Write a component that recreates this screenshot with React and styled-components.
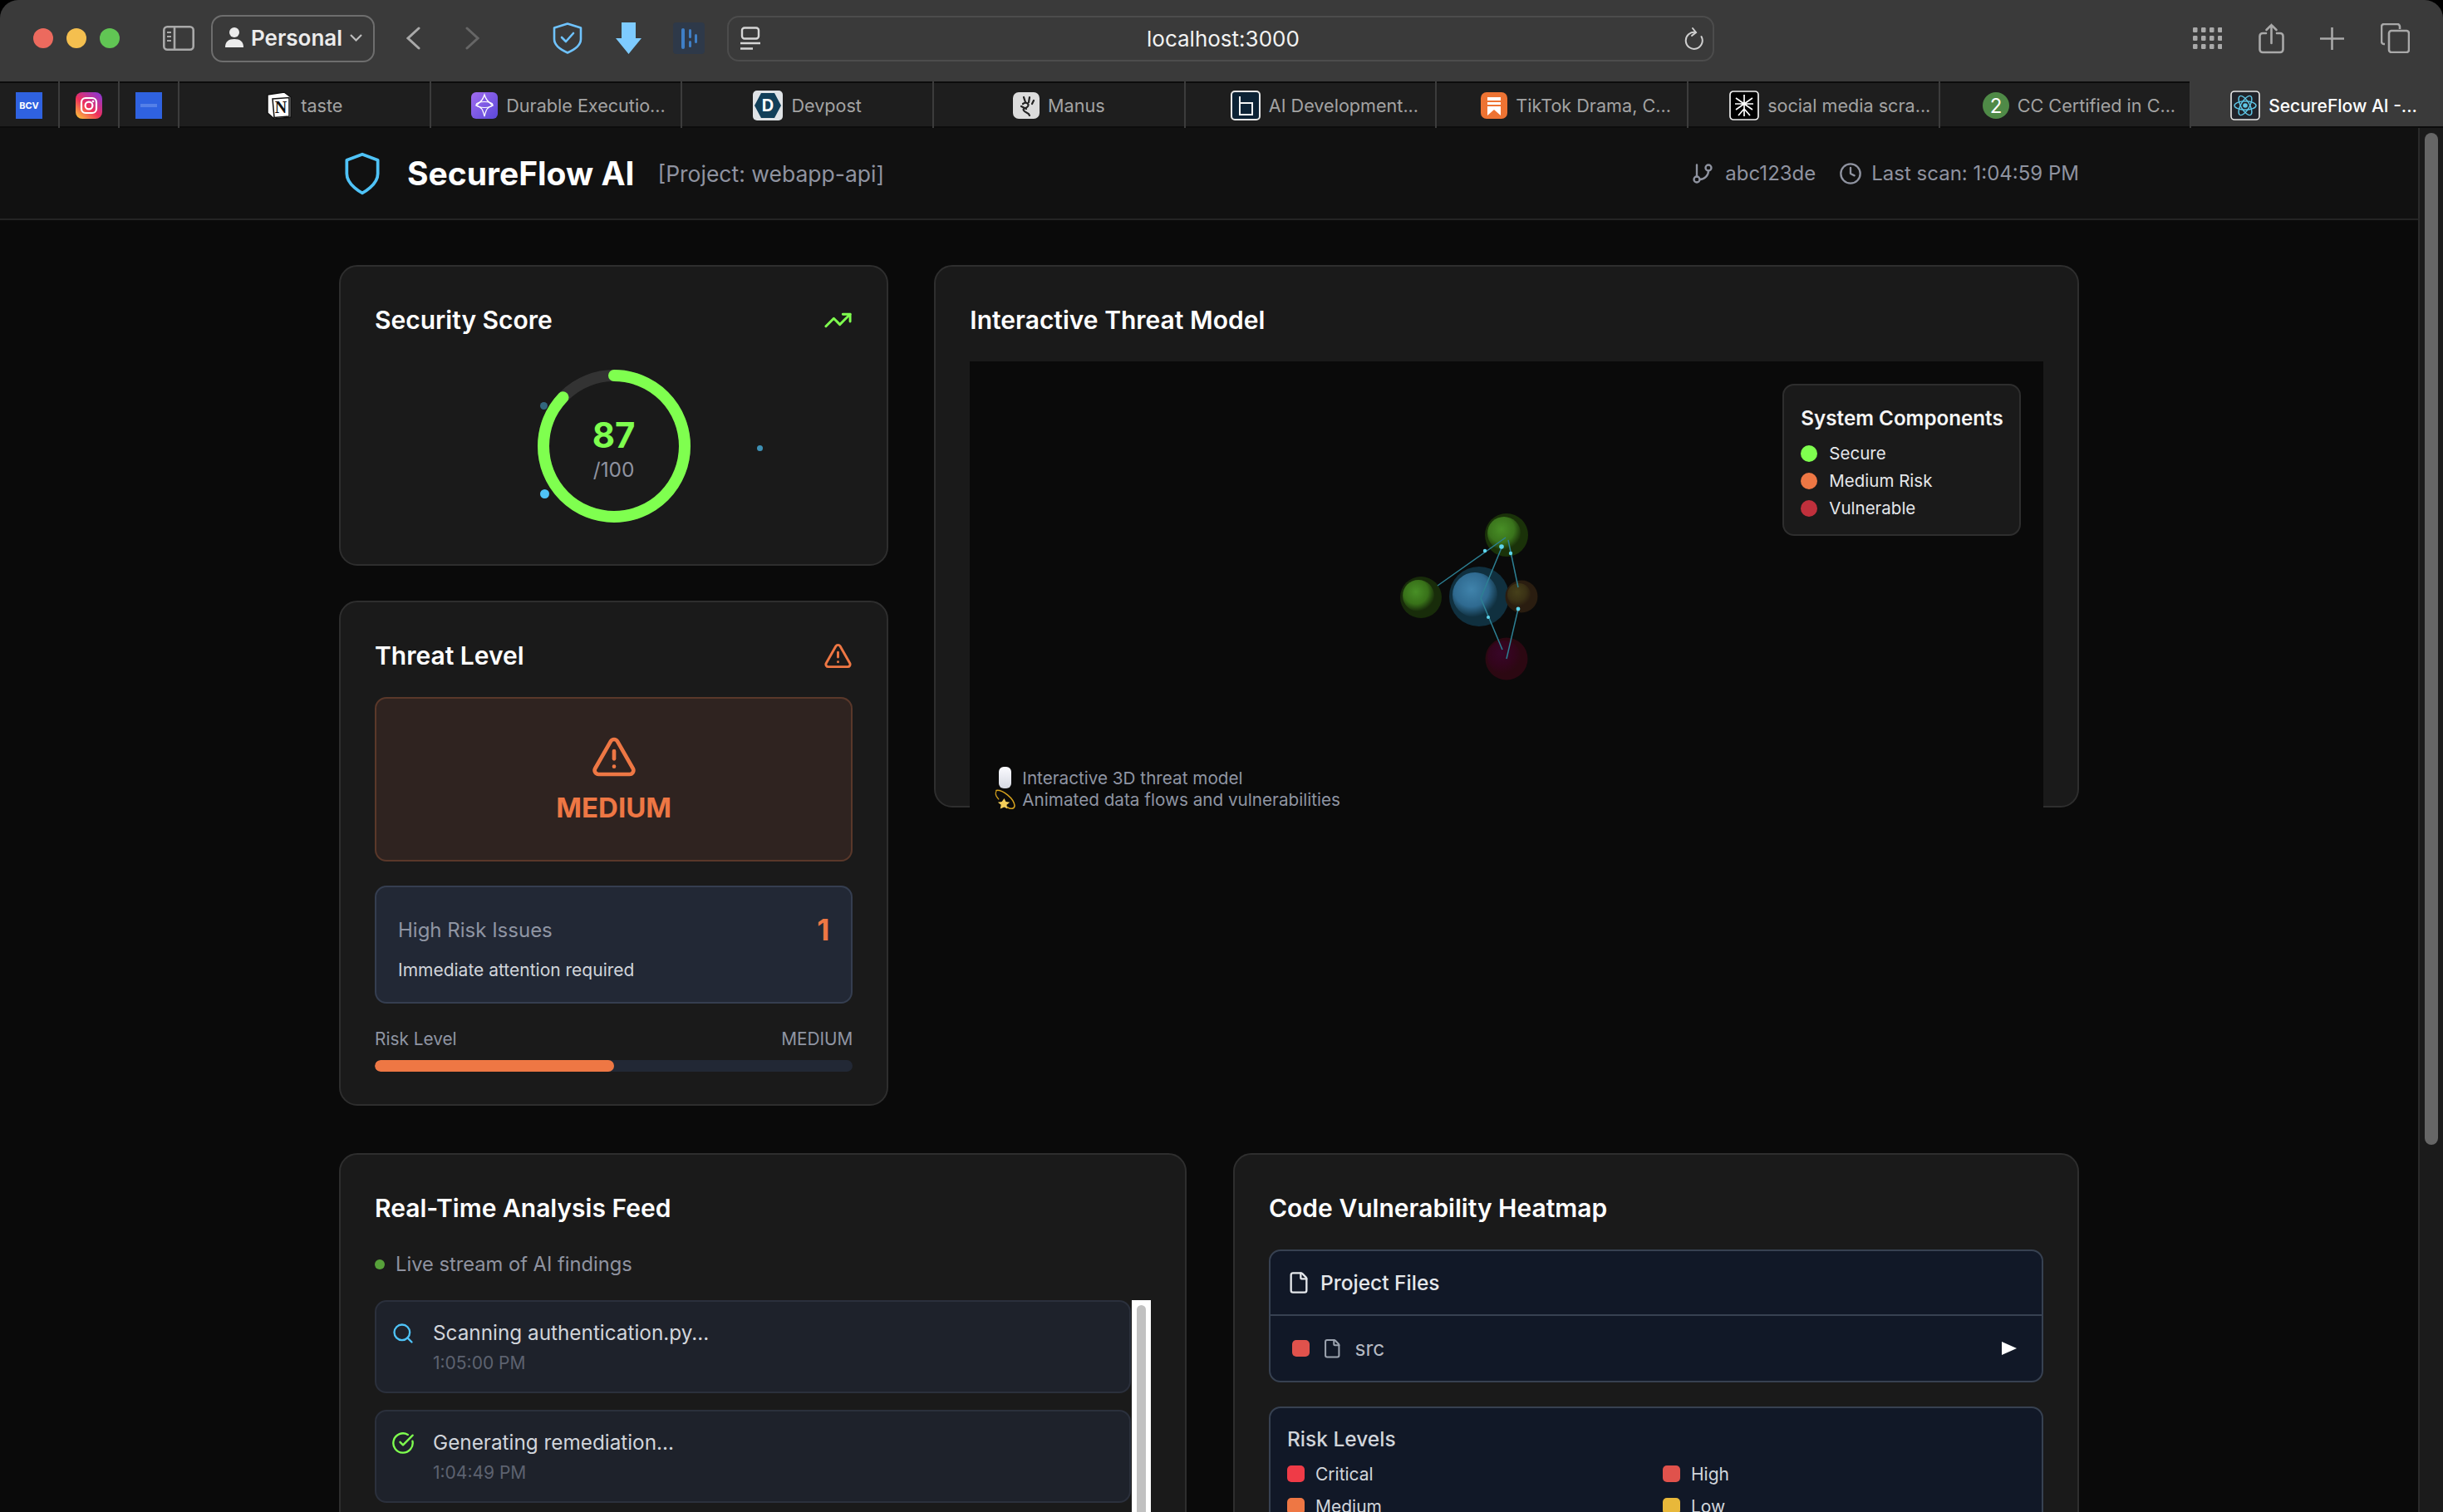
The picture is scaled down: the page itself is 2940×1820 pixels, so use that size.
import React from "react";
import styled, { createGlobalStyle } from "styled-components";
import { TrendingUp, TriangleAlert, GitBranch, Clock, Search, CircleCheckBig, File } from "lucide-react";

const Global = createGlobalStyle`
  html, body { margin: 0; padding: 0; background: #000; overflow: hidden; }
  body { font-family: Inter, "Noto Sans", "Liberation Sans", sans-serif; }
  * { box-sizing: border-box; }
`;

const Window = styled.div`
  width: 2940px; height: 1820px; display: flex; flex-direction: column;
  overflow: hidden; border-radius: 22px 22px 0 0; background: #0a0a0a;
`;
const Toolbar = styled.div`
  height: 98px; flex: none; display: flex; align-items: center;
  padding: 0 0 6px 40px; background: #3a3a3a;
`;
const Lights = styled.div`display: flex; gap: 16px;`;
const Light = styled.span`
  width: 24px; height: 24px; border-radius: 50%; background: ${p => p.$c};
`;
const Slot = styled.div`
  margin-left: ${p => p.$ml}px; display: flex; align-items: center; flex: none;
  svg { display: block; }
`;
const Profile = styled.div`
  width: 197px; height: 57px; border: 2px solid #6e6e6e; border-radius: 14px;
  margin-left: 20px; display: flex; align-items: center; padding: 0 0 2px 15px;
  color: #ececec; font-size: 26px; font-weight: 600; gap: 9px; flex: none;
`;
const UrlBar = styled.div`
  position: relative; width: 1188px; height: 55px; margin-left: 27px; flex: none;
  border: 2px solid #4c4c4c; border-radius: 14px; display: flex; align-items: center;
  justify-content: space-between; padding: 0 11px 0 14px;
`;
const UrlText = styled.span`
  color: #f2f2f2; font-size: 26px; font-weight: 400; position: absolute;
  left: 503px; top: 11px; line-height: 30px;
`;

const TabBar = styled.div`
  height: 56px; flex: none; display: flex; background: #1e1e1e;
  box-shadow: inset 0 2px 0 #0c0c0c, inset 0 -2px 0 #0c0c0c;
`;
const PinTab = styled.div`
  width: 72px; flex: none; display: flex; align-items: center; justify-content: center;
  padding-top: 2px; border-right: 2px solid #3c3c3c;
`;
const Tab = styled.div`
  flex: 0 0 calc((100% - 216px) / 9); min-width: 0; display: flex; align-items: center; justify-content: center; gap: 10px;
  padding: 2px 0 0 ${p => p.$shift || 0}px;
  font-size: ${p => p.$active ? 21 : 21.6}px; color: ${p => p.$active ? "#fff" : "#a3a3a3"};
  font-weight: ${p => p.$active ? 500 : 400};
  background: ${p => p.$active ? "#3a3a3a" : "transparent"};
  border-right: ${p => p.$active ? "none" : "2px solid #3c3c3c"};
  box-shadow: ${p => p.$active ? "inset 0 -2px 0 #0c0c0c" : "none"};
  svg { display: block; flex: none; }
`;

const Viewport = styled.div`flex: 1; min-height: 0; display: flex;`;
const Page = styled.div`flex: 1; min-width: 0; overflow: hidden; background: #0a0a0a;`;
const WinBar = styled.div`
  width: 30px; flex: none; background: #1b1b1b; border-left: 2px solid #2a2a2a; padding: 6px 6px 0 6px;
`;
const WinThumb = styled.div`width: 16px; height: 1218px; border-radius: 8px; background: #666;`;

const Header = styled.header`
  height: 111px; background: #111; border-bottom: 2px solid #242424;
  display: flex; align-items: center; justify-content: space-between; padding: 0 408px;
`;
const Brand = styled.div`display: flex; align-items: center;`;
const AppName = styled.h1`
  margin: 0 0 0 26px; font-size: 39px; font-weight: 700; color: #fff; line-height: 50px;
`;
const Project = styled.span`margin-left: 28px; font-size: 26.5px; color: #8f93a0;`;
const Meta = styled.div`
  display: flex; align-items: center; font-size: 24px; color: #8f93a0;
  svg { flex: none; }
`;
const MetaText = styled.span`margin-left: ${p => p.$ml}px;`;
const MetaClock = styled(Clock)`margin-left: 28px;`;

const Main = styled.main`padding: 54px 408px 0;`;
const TopGrid = styled.div`
  display: grid; grid-template-columns: repeat(3, 1fr); column-gap: 55px; align-items: start;
  margin-bottom: 57px;
`;
const LeftCol = styled.div`display: flex; flex-direction: column; gap: 42px;`;
const Card = styled.section`
  background: #1a1a1a; border: 2px solid #2e2e2e; border-radius: 22px;
  padding: 40px 41px ${p => p.$pb || 39}px;
`;
const ModelCard = styled(Card)`grid-column: span 2; height: 653px;`;
const CardHead = styled.div`
  display: flex; justify-content: space-between; align-items: center; height: 49px;
  margin-bottom: ${p => p.$mb}px;
`;
const CardTitle = styled.h2`margin: 0; font-size: 30px; font-weight: 600; color: #fff; line-height: 49px;`;

const RingWrap = styled.div`position: relative; width: 184px; height: 184px; margin: 0 auto;`;
const RingText = styled.div`
  position: absolute; inset: 0; display: flex; flex-direction: column; align-items: center; padding-top: 55px;
`;
const Score = styled.span`font-size: 42px; font-weight: 700; color: #7fff4f; line-height: 48px;`;
const Outof = styled.span`font-size: 24.5px; color: #8f93a0; line-height: 35px;`;
const Spark = styled.span`
  position: absolute; border-radius: 50%; background: #4fc3f7;
  left: ${p => p.$x}px; top: ${p => p.$y}px; width: ${p => p.$d}px; height: ${p => p.$d}px; opacity: ${p => p.$o};
`;

const LevelBox = styled.div`
  height: 198px; background: #2f2320; border: 2px solid #5a382a; border-radius: 14px;
  display: flex; flex-direction: column; align-items: center; padding-top: 42px;
`;
const LevelText = styled.div`
  font-size: 33px; font-weight: 700; color: #ee7744; line-height: 44px; margin-top: 11px;
`;
const InfoBox = styled.div`
  height: 142px; margin-top: 29px; background: #222835; border: 2px solid #353e50; border-radius: 14px;
  padding: 26px 26px 0;
`;
const InfoRow = styled.div`display: flex; justify-content: space-between; align-items: center; height: 50px;`;
const InfoLabel = styled.span`font-size: 24px; color: #8f95a3;`;
const InfoNum = styled.span`font-size: 35px; font-weight: 700; color: #ee7744;`;
const InfoSub = styled.div`font-size: 21px; line-height: 30px; color: #d1d5db; margin-top: 9px;`;
const RiskRow = styled.div`
  display: flex; justify-content: space-between; font-size: 20.8px; line-height: 30px; color: #8f95a3;
  margin-top: 28px;
`;
const Bar = styled.div`height: 14px; margin-top: 10px; border-radius: 7px; background: #222835; overflow: hidden;`;
const BarFill = styled.div`height: 100%; border-radius: 7px; background: #ee7744; width: ${p => p.$w}%;`;

const Canvas = styled.div`position: relative; height: 570px; background: #0a0a0a;`;
const Scene = styled.svg`position: absolute; left: 453px; top: 145px;`;
const Legend = styled.div`
  position: absolute; left: 978px; top: 27px; width: 287px; height: 183px;
  background: #1a1a1a; border: 2px solid #2e2e2e; border-radius: 14px; padding: 22px 0 0 20px;
`;
const LegendTitle = styled.div`
  font-size: 24.2px; font-weight: 600; color: #f5f5f5; line-height: 35px; margin-bottom: 8px; white-space: nowrap;
`;
const LegendItem = styled.div`
  display: flex; align-items: center; gap: 14px; height: 33px; font-size: 20.5px; color: #e5e7eb;
`;
const Dot = styled.span`width: 20px; height: 20px; border-radius: 50%; background: ${p => p.$c}; flex: none;`;
const CanvasNote = styled.div`position: absolute; left: 30px; top: 488px;`;
const NoteLine = styled.div`
  display: flex; align-items: center; gap: 8px; height: 26px; font-size: 20.7px; color: #8f95a3;
`;
const NoteIcon = styled.span`width: 25px; display: flex; justify-content: center; flex: none;`;

const BottomGrid = styled.div`display: grid; grid-template-columns: 1fr 1fr; column-gap: 56px;`;
const Live = styled.div`
  display: flex; align-items: center; gap: 13px; height: 35px; margin: 25px 0 26px;
  font-size: 23.7px; color: #8f93a0;
`;
const LiveDot = styled.span`width: 12px; height: 12px; border-radius: 50%; background: #57a13a;`;
const FeedWrap = styled.div`display: flex; height: 700px;`;
const FeedList = styled.div`width: 910px; flex: none; display: flex; flex-direction: column; gap: 20px;`;
const FeedItem = styled.div`
  height: 112px; flex: none; display: flex; gap: 22px; padding: 20px 18px;
  background: #1e222b; border: 2px solid #2b303c; border-radius: 14px;
`;
const FeedIcon = styled.div`height: 35px; display: flex; align-items: center; flex: none;`;
const FeedText = styled.div`font-size: 24.3px; line-height: 35px; color: #d1d5db;`;
const FeedTime = styled.div`font-size: 21px; line-height: 30px; color: #5d6270; margin-top: 4px;`;
const ListTrack = styled.div`width: 23px; flex: none; background: #fff; padding: 6px 6px 0; margin-left: 1px;`;
const ListThumb = styled.div`width: 11px; height: 600px; border-radius: 6px; background: #c1c1c1;`;

const Panel = styled.div`
  margin-top: ${p => p.$mt}px; background: #111827; border: 2px solid #374151; border-radius: 14px;
  ${p => p.$open ? "height: 400px;" : ""}
`;
const PanelHead = styled.div`
  height: 78px; display: flex; align-items: center; gap: 12px; padding: 0 20px;
  border-bottom: 2px solid #374151; font-size: 24.5px; font-weight: 500; color: #e5e7eb;
`;
const FileRow = styled.div`
  height: 78px; display: flex; align-items: center; gap: 15px; padding: 0 30px 0 26px;
  font-size: 24.5px; color: #b6bac2;
`;
const Square = styled.span`width: 21px; height: 20px; border-radius: 5px; background: ${p => p.$c}; flex: none;`;
const Caret = styled.span`
  margin-left: auto; width: 0; height: 0; border-left: 18px solid #fff;
  border-top: 8px solid transparent; border-bottom: 8px solid transparent;
`;
const RiskBody = styled.div`padding: 20px 20px 0;`;
const RiskTitle = styled.div`font-size: 24.5px; line-height: 35px; font-weight: 500; color: #d1d5db; margin-bottom: 9px;`;
const RiskGrid = styled.div`display: grid; grid-template-columns: 1fr 1fr; column-gap: 16px; row-gap: 9px;`;
const RiskItem = styled.div`display: flex; align-items: center; gap: 13px; height: 30px; font-size: 21px; color: #d1d5db;`;

const Sidebar = () => (
  <svg width="38" height="30" viewBox="0 0 38 30" fill="none" stroke="#a9a9a9" strokeWidth="2.6">
    <rect x="1.3" y="1.3" width="35.4" height="27.4" rx="4" /><path d="M14 1.5v27" />
    <path d="M5 8h5M5 13h5M5 18h5" strokeWidth="2" />
  </svg>
);
const Person = () => (
  <svg width="22" height="26" viewBox="0 0 22 26" fill="#ececec">
    <circle cx="11" cy="7" r="6" /><path d="M0 25c0-7 4-10 11-10s11 3 11 10z" />
  </svg>
);
const ChevDown = () => (
  <svg width="15" height="9" viewBox="0 0 15 9" fill="none" stroke="#bdbdbd" strokeWidth="2.2"><path d="M1 1l6.5 6.5L14 1" /></svg>
);
const Chev = ({ dir, c }) => (
  <svg width="17" height="28" viewBox="0 0 17 28" fill="none" stroke={c} strokeWidth="3" strokeLinecap="round">
    <path d={dir === "l" ? "M15 2L2 14l13 12" : "M2 2l13 12L2 26"} />
  </svg>
);
const GuardShield = () => (
  <svg width="38" height="38" viewBox="0 0 38 38" fill="none" stroke="#6fc3ff" strokeWidth="2.6" strokeLinejoin="round">
    <path d="M19 1.5L35 6.5V20C35 28 27 33 19 36.5 11 33 3 28 3 20V6.5z" />
    <path d="M12 18l5 5 9-10" strokeLinecap="round" />
  </svg>
);
const DownArrow = () => (
  <svg width="31" height="38" viewBox="0 0 31 38" fill="#7ecbff"><path d="M7 0h17v19h7L15.5 38 0 19h7z" /></svg>
);
const DarkApp = () => (
  <svg width="38" height="38" viewBox="0 0 38 38">
    <rect width="38" height="38" rx="4" fill="#2e3949" />
    <rect x="10" y="7" width="4" height="25" rx="2" fill="#3f7fc6" />
    <rect x="19" y="8" width="3" height="11" rx="1.5" fill="#3f7fc6" />
    <rect x="19" y="22" width="3" height="8" rx="1.5" fill="#3f7fc6" />
    <rect x="26" y="14" width="3" height="11" rx="1.5" fill="#3f7fc6" />
  </svg>
);
const PageMenu = () => (
  <svg width="24" height="28" viewBox="0 0 24 28" fill="none" stroke="#d6d6d6" strokeWidth="2.4">
    <rect x="2" y="1.5" width="20" height="13" rx="3" /><path d="M0 20h24M0 26.5h15" />
  </svg>
);
const Reload = () => (
  <svg width="24" height="28" viewBox="0 0 24 28" fill="none" stroke="#cfcfcf" strokeWidth="2" strokeLinecap="round">
    <path d="M14.5 7A10 10 0 1 0 21.5 12" /><path d="M11 2l4 5-5 4" />
  </svg>
);
const Apps = () => (
  <svg width="35" height="26" viewBox="0 0 35 26" fill="#a9a9a9">
    {[0, 10, 20].map(y => [0, 10, 20, 30].map(x => <rect key={x + "-" + y} x={x} y={y} width="5.5" height="6" rx="1.2" />))}
  </svg>
);
const Share = () => (
  <svg width="31" height="37" viewBox="0 0 31 37" fill="none" stroke="#a9a9a9" strokeWidth="2.6" strokeLinecap="round">
    <path d="M9 12H5a3.5 3.5 0 0 0-3.5 3.5v16A3.5 3.5 0 0 0 5 35h21a3.5 3.5 0 0 0 3.5-3.5v-16A3.5 3.5 0 0 0 26 12h-4" />
    <path d="M15.5 24V2M9.5 8l6-6 6 6" />
  </svg>
);
const Plus = () => (
  <svg width="29" height="27" viewBox="0 0 29 27" fill="none" stroke="#a9a9a9" strokeWidth="2.6"><path d="M14.5 0v27M0 13.5h29" /></svg>
);
const TabsIcon = () => (
  <svg width="35" height="36" viewBox="0 0 35 36" fill="none" stroke="#a9a9a9" strokeWidth="2.6">
    <path d="M5 25H4a3 3 0 0 1-3-3V4a3 3 0 0 1 3-3h16a3 3 0 0 1 3 3v3" />
    <rect x="10" y="9" width="24" height="26" rx="3" />
  </svg>
);
const LogoShield = () => (
  <svg width="56" height="56" viewBox="0 0 24 24" fill="none" stroke="#4fc3f7" strokeWidth="1.6" strokeLinejoin="round">
    <path d="M12 22s8-4 8-10V5l-8-3-8 3v7c0 6 8 10 8 10z" />
  </svg>
);

const FavBcv = () => (
  <svg width="32" height="32" viewBox="0 0 32 32"><rect width="32" height="32" fill="#2f62e0" /><text x="16" y="20" fontSize="11" fontWeight="700" fill="#fff" textAnchor="middle" fontFamily="Inter">BCV</text></svg>
);
const FavInsta = () => (
  <svg width="32" height="32" viewBox="0 0 32 32">
    <defs><linearGradient id="ig" x1="0.1" y1="1" x2="0.9" y2="0"><stop offset="0" stopColor="#fdc13a" /><stop offset="0.45" stopColor="#ee2f5b" /><stop offset="1" stopColor="#8a37d8" /></linearGradient></defs>
    <rect width="32" height="32" rx="8" fill="url(#ig)" />
    <rect x="7" y="7" width="18" height="18" rx="5" fill="none" stroke="#fff" strokeWidth="2.2" />
    <circle cx="16" cy="16" r="4.4" fill="none" stroke="#fff" strokeWidth="2.2" /><circle cx="21" cy="11" r="1.3" fill="#fff" />
  </svg>
);
const FavBlue = () => (
  <svg width="32" height="32" viewBox="0 0 32 32"><rect width="32" height="32" fill="#2f62e0" /><rect x="6" y="14" width="20" height="4" fill="#5580e8" /></svg>
);
const FavNotion = () => (
  <svg width="32" height="34" viewBox="0 0 32 34">
    <path d="M2 4l20-3 8 6v24l-20 2-8-7z" fill="#fff" stroke="#111" strokeWidth="1.5" />
    <path d="M8 9l20-1.5V30L10 31.5z" fill="#fff" stroke="#111" strokeWidth="1.5" />
    <text x="18" y="26" fontSize="20" fontWeight="700" fill="#111" textAnchor="middle" fontFamily="Liberation Serif">N</text>
  </svg>
);
const FavDurable = () => (
  <svg width="32" height="32" viewBox="0 0 32 32">
    <defs><linearGradient id="du" x1="0" y1="0" x2="1" y2="1"><stop offset="0" stopColor="#a16cf0" /><stop offset="1" stopColor="#5a48d8" /></linearGradient></defs>
    <rect width="32" height="32" rx="6" fill="url(#du)" />
    <path d="M16 3c2 6 3 7 10 13-7 2-8 5-10 13-2-8-3-11-10-13 7-6 8-7 10-13z" fill="none" stroke="#fff" strokeWidth="1.3" />
    <ellipse cx="16" cy="15" rx="10" ry="3.5" fill="none" stroke="#fff" strokeWidth="1.2" />
  </svg>
);
const FavDev = () => (
  <svg width="36" height="36" viewBox="0 0 36 36">
    <rect width="36" height="36" rx="5" fill="#dfe3e6" /><path d="M10 3h16l8 15-8 15H10L2 18z" fill="#113f59" />
    <text x="18" y="25" fontSize="20" fontWeight="700" fill="#fff" textAnchor="middle" fontFamily="Inter">D</text>
  </svg>
);
const FavManus = () => (
  <svg width="32" height="32" viewBox="0 0 32 32" fill="none" stroke="#222" strokeWidth="2.2" strokeLinecap="round">
    <rect width="32" height="32" rx="7" fill="#dcdcdc" stroke="none" />
    <path d="M12 14c4-3 8 0 6 3s-7 2-5 5 6 2 7 6M15 12l-2-6M19 12l1-6M23 14l2-4M10 17l6 3" />
  </svg>
);
const FavB = () => (
  <svg width="36" height="36" viewBox="0 0 36 36" fill="none" stroke="#f5f5f5" strokeWidth="2">
    <rect x="1" y="1" width="34" height="34" rx="4" fill="#0c2235" stroke="#e8e8e8" />
    <path d="M11 7v7M11 15h15v14H11z" />
  </svg>
);
const FavTiktok = () => (
  <svg width="32" height="32" viewBox="0 0 32 32">
    <rect width="32" height="32" rx="7" fill="#ed7333" />
    <path d="M8 6h16v22l-8-7-8 7z" fill="#fff" /><path d="M8 11h16M8 16h16" stroke="#ed7333" strokeWidth="2" />
  </svg>
);
const FavSocial = () => (
  <svg width="36" height="36" viewBox="0 0 36 36" fill="none" stroke="#fff" strokeWidth="1.7">
    <rect x="1" y="1" width="34" height="34" rx="4" fill="#000" stroke="#f0f0f0" />
    <path d="M18 5v26M8 9l20 14M28 9L8 23M7 16h22M11 30l7-8 7 8" />
  </svg>
);
const FavCc = () => (
  <svg width="32" height="32" viewBox="0 0 32 32">
    <circle cx="16" cy="16" r="16" fill="#4f8a47" />
    <text x="16" y="25" fontSize="24" fill="#fff" textAnchor="middle" fontFamily="Inter">2</text>
  </svg>
);
const FavReact = () => (
  <svg width="36" height="36" viewBox="0 0 36 36" fill="none" stroke="#5fc8e8" strokeWidth="1.4">
    <rect x="1" y="1" width="34" height="34" rx="4" fill="#20232a" stroke="#e8e8e8" strokeWidth="1.6" />
    <circle cx="18" cy="18" r="2.8" fill="#5fc8e8" stroke="none" />
    <ellipse cx="18" cy="18" rx="13" ry="5.2" />
    <ellipse cx="18" cy="18" rx="13" ry="5.2" transform="rotate(60 18 18)" />
    <ellipse cx="18" cy="18" rx="13" ry="5.2" transform="rotate(120 18 18)" />
  </svg>
);

const MouseEmoji = () => (
  <svg width="15" height="26" viewBox="0 0 15 26">
    <defs><linearGradient id="mo" x1="0" y1="0" x2="0" y2="1"><stop offset="0" stopColor="#fbfbff" /><stop offset="1" stopColor="#d5d8e2" /></linearGradient></defs>
    <rect width="15" height="26" rx="6" fill="url(#mo)" />
  </svg>
);
const DizzyEmoji = () => (
  <svg width="26" height="26" viewBox="0 0 26 26" fill="none">
    <path d="M2 2C10 1 24 12 25 21 25 25 20 26 16 23" stroke="#d6a21e" strokeWidth="1.6" strokeLinecap="round" />
    <path d="M2 3C0 7 3 11 5 13" stroke="#d6a21e" strokeWidth="1.2" strokeLinecap="round" />
    <path d="M12 12l2 4 5 1-4 3 1 5-4-2-5 2 1-5-4-3 5-1z" fill="#f5cf5a" />
  </svg>
);

const Sphere = ({ id, halo, hr, x, y, r, sx, sy, hi, lo }) => (
  <g>
    <defs>
      <radialGradient id={id} cx="0.42" cy="0.38" r="0.62">
        <stop offset="0" stopColor={hi} /><stop offset="0.62" stopColor={lo} /><stop offset="1" stopColor={halo} />
      </radialGradient>
    </defs>
    <circle cx={x} cy={y} r={hr} fill={halo} />
    <circle cx={sx} cy={sy} r={r} fill={`url(#${id})`} />
  </g>
);

const ThreatScene = () => (
  <Scene width="300" height="260" viewBox="0 0 300 260">
    <Sphere id="s1" x={193} y={64} hr={26} halo="#1a3209" sx={190} sy={62} r={20} hi="#488f26" lo="#3a741c" />
    <Sphere id="s2" x={90} y={139} hr={25} halo="#182c0a" sx={87} sy={137} r={19} hi="#488f26" lo="#387119" />
    <Sphere id="s3" x={160} y={138} hr={36} halo="#10303f" sx={155} sy={136} r={27} hi="#4083ab" lo="#2f6a90" />
    <Sphere id="s4" x={211} y={138} hr={19.5} halo="#2a1d10" sx={208} sy={136} r={14} hi="#46401a" lo="#3a3115" />
    <Sphere id="s5" x={193} y={213} hr={25.5} halo="#2c0812" sx={190} sy={211} r={20} hi="#380628" lo="#33051c" />
    <g fill="none" stroke="#2d8094" strokeWidth="1.5">
      <path d="M192 67L110 125" /><path d="M188 77L162 140L188 202" />
      <path d="M195 70L207 127" /><path d="M207 153L193 213" />
    </g>
    <g fill="#5fd6ee">
      <circle cx="167" cy="83" r="2.2" /><circle cx="187" cy="78" r="2.8" /><circle cx="198" cy="86" r="2.2" />
      <circle cx="207" cy="153" r="2.4" /><circle cx="171" cy="163" r="2" />
    </g>
  </Scene>
);

const pins = [<FavBcv />, <FavInsta />, <FavBlue />];
const tabs = [
  { icon: <FavNotion />, label: "taste" },
  { icon: <FavDurable />, label: "Durable Executio...", shift: 30 },
  { icon: <FavDev />, label: "Devpost" },
  { icon: <FavManus />, label: "Manus" },
  { icon: <FavB />, label: "AI Development...", shift: 34 },
  { icon: <FavTiktok />, label: "TikTok Drama, C...", shift: 34 },
  { icon: <FavSocial />, label: "social media scra...", shift: 40 },
  { icon: <FavCc />, label: "CC Certified in C...", shift: 34 },
  { icon: <FavReact />, label: "SecureFlow AI -...", shift: 16, active: true },
];
const legend = [["#7fff4f", "Secure"], ["#ee7744", "Medium Risk"], ["#c0303c", "Vulnerable"]];
const feed = [
  [<Search size={28} color="#4fc3f7" />, "Scanning authentication.py...", "1:05:00 PM"],
  [<CircleCheckBig size={28} color="#7fff4f" />, "Generating remediation...", "1:04:49 PM"],
  [<Search size={28} color="#4fc3f7" />, "Scanning database.py...", "1:04:38 PM"],
];
const risks = [["#ef3b47", "Critical"], ["#e0524c", "High"], ["#ee7744", "Medium"], ["#e8b83a", "Low"]];

const C = 2 * Math.PI * 85;

export default function App() {
  return (
    <Window>
      <Global />
      <Toolbar>
        <Lights>
          <Light $c="#ec6a5e" /><Light $c="#f4bf4f" /><Light $c="#61c554" />
        </Lights>
        <Slot $ml={52}><Sidebar /></Slot>
        <Profile><Person />Personal<ChevDown /></Profile>
        <Slot $ml={38}><Chev dir="l" c="#a9a9a9" /></Slot>
        <Slot $ml={54}><Chev dir="r" c="#666" /></Slot>
        <Slot $ml={87}><GuardShield /></Slot>
        <Slot $ml={39}><DownArrow /></Slot>
        <Slot $ml={38}><DarkApp /></Slot>
        <UrlBar><PageMenu /><UrlText>localhost:3000</UrlText><Reload /></UrlBar>
        <Slot $ml={576}><Apps /></Slot>
        <Slot $ml={44}><Share /></Slot>
        <Slot $ml={43}><Plus /></Slot>
        <Slot $ml={44}><TabsIcon /></Slot>
      </Toolbar>
      <TabBar>
        {pins.map((p, i) => <PinTab key={i}>{p}</PinTab>)}
        {tabs.map(t => <Tab key={t.label} $active={t.active} $shift={t.shift}>{t.icon}{t.label}</Tab>)}
      </TabBar>
      <Viewport>
        <Page>
          <Header>
            <Brand>
              <LogoShield />
              <AppName>SecureFlow AI</AppName>
              <Project>[Project: webapp-api]</Project>
            </Brand>
            <Meta>
              <GitBranch size={28} />
              <MetaText $ml={13}>abc123de</MetaText>
              <MetaClock size={28} />
              <MetaText $ml={11}>Last scan: 1:04:59 PM</MetaText>
            </Meta>
          </Header>
          <Main>
            <TopGrid>
              <LeftCol>
                <Card $pb={50}>
                  <CardHead $mb={35}>
                    <CardTitle>Security Score</CardTitle>
                    <TrendingUp size={35} color="#7fff4f" />
                  </CardHead>
                  <RingWrap>
                    <svg width="184" height="184" viewBox="0 0 184 184" fill="none" strokeWidth="14">
                      <circle cx="92" cy="92" r="85" stroke="#333" />
                      <circle cx="92" cy="92" r="85" stroke="#7fff4f" strokeLinecap="round"
                        strokeDasharray={`${C * 0.87} ${C}`} transform="rotate(-90 92 92)" />
                    </svg>
                    <RingText><Score>87</Score><Outof>/100</Outof></RingText>
                    <Spark $x={3} $y={39} $d={9} $o={0.45} />
                    <Spark $x={3} $y={144} $d={11} $o={1} />
                    <Spark $x={264} $y={91} $d={7} $o={0.7} />
                  </RingWrap>
                </Card>
                <Card>
                  <CardHead $mb={25}>
                    <CardTitle>Threat Level</CardTitle>
                    <TriangleAlert size={35} color="#ee7744" />
                  </CardHead>
                  <LevelBox>
                    <TriangleAlert size={56} color="#ee7744" />
                    <LevelText>MEDIUM</LevelText>
                  </LevelBox>
                  <InfoBox>
                    <InfoRow><InfoLabel>High Risk Issues</InfoLabel><InfoNum>1</InfoNum></InfoRow>
                    <InfoSub>Immediate attention required</InfoSub>
                  </InfoBox>
                  <RiskRow><span>Risk Level</span><span>MEDIUM</span></RiskRow>
                  <Bar><BarFill $w={50} /></Bar>
                </Card>
              </LeftCol>
              <ModelCard>
                <CardHead $mb={25}><CardTitle>Interactive Threat Model</CardTitle></CardHead>
                <Canvas>
                  <ThreatScene />
                  <Legend>
                    <LegendTitle>System Components</LegendTitle>
                    {legend.map(([c, t]) => <LegendItem key={t}><Dot $c={c} />{t}</LegendItem>)}
                  </Legend>
                  <CanvasNote>
                    <NoteLine><NoteIcon><MouseEmoji /></NoteIcon>Interactive 3D threat model</NoteLine>
                    <NoteLine><NoteIcon><DizzyEmoji /></NoteIcon>Animated data flows and vulnerabilities</NoteLine>
                  </CanvasNote>
                </Canvas>
              </ModelCard>
            </TopGrid>
            <BottomGrid>
              <Card>
                <CardHead $mb={0}><CardTitle>Real-Time Analysis Feed</CardTitle></CardHead>
                <Live><LiveDot />Live stream of AI findings</Live>
                <FeedWrap>
                  <FeedList>
                    {feed.map(([icon, text, time]) => (
                      <FeedItem key={time}>
                        <FeedIcon>{icon}</FeedIcon>
                        <div><FeedText>{text}</FeedText><FeedTime>{time}</FeedTime></div>
                      </FeedItem>
                    ))}
                  </FeedList>
                  <ListTrack><ListThumb /></ListTrack>
                </FeedWrap>
              </Card>
              <Card>
                <CardHead $mb={0}><CardTitle>Code Vulnerability Heatmap</CardTitle></CardHead>
                <Panel $mt={25}>
                  <PanelHead><File size={28} />Project Files</PanelHead>
                  <FileRow><Square $c="#e0524c" /><File size={24.5} color="#9ca3af" />src<Caret /></FileRow>
                </Panel>
                <Panel $mt={29} $open>
                  <RiskBody>
                    <RiskTitle>Risk Levels</RiskTitle>
                    <RiskGrid>
                      {risks.map(([c, t]) => <RiskItem key={t}><Square $c={c} />{t}</RiskItem>)}
                    </RiskGrid>
                  </RiskBody>
                </Panel>
              </Card>
            </BottomGrid>
          </Main>
        </Page>
        <WinBar><WinThumb /></WinBar>
      </Viewport>
    </Window>
  );
}
